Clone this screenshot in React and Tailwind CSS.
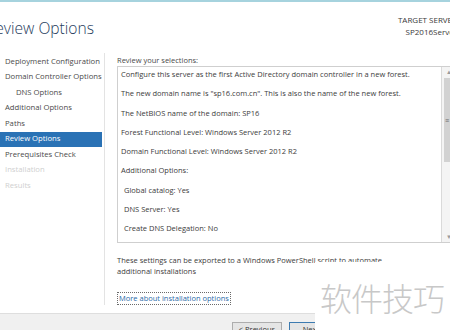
import React from 'react';

const FONT = { fontFamily: '"Open Sans", "Noto Sans", sans-serif' };

const navItems = [
  { label: 'Deployment Configuration' },
  { label: 'Domain Controller Options' },
  { label: 'DNS Options', indent: true },
  { label: 'Additional Options' },
  { label: 'Paths' },
  { label: 'Review Options', active: true },
  { label: 'Prerequisites Check' },
  { label: 'Installation', disabled: true },
  { label: 'Results', disabled: true },
];

const summary = [
  { text: 'Configure this server as the first Active Directory domain controller in a new forest.' },
  { text: 'The new domain name is "sp16.com.cn". This is also the name of the new forest.' },
  { text: 'The NetBIOS name of the domain: SP16' },
  { text: 'Forest Functional Level: Windows Server 2012 R2' },
  { text: 'Domain Functional Level: Windows Server 2012 R2' },
  { text: 'Additional Options:' },
  { text: 'Global catalog: Yes', indent: true },
  { text: 'DNS Server: Yes', indent: true },
  { text: 'Create DNS Delegation: No', indent: true },
];

function NavList() {
  return (
    <div className="w-[111px] shrink-0 pt-[1px] mb-[8px] border-r border-[#e3e3e3]">
      {navItems.map((item) => (
        <div
          key={item.label}
          className={
            'h-[15.5px] mr-[2px] flex items-center text-[7.7px] whitespace-nowrap ' +
            (item.indent ? 'pl-[22px] ' : 'pl-[11px] ') +
            (item.active
              ? 'bg-[#2a72b5] text-white'
              : item.disabled
              ? 'text-[#cfcfcf]'
              : 'text-[#4a4a4a]')
          }
        >
          {item.label}
        </div>
      ))}
    </div>
  );
}

function Scrollbar() {
  return (
    <div className="w-[15px] shrink-0 border-l border-[#dadada] bg-[#f4f4f4] flex flex-col">
      <div className="h-[10px] flex items-center justify-center text-[6px] text-[#9a9a9a]">▲</div>
      <div className="mx-[2px] mt-[1px] h-[84px] bg-[#d2d2d2] flex items-center justify-start pl-[1px] text-[7px] leading-none text-[#6a6a6a]">≡</div>
      <div className="flex-1" />
      <div className="h-[10px] flex items-center justify-center text-[6px] text-[#9a9a9a]">▼</div>
    </div>
  );
}

export default function App() {
  return (
    <div className="relative ml-[-6px] w-[463px] h-[330px] overflow-hidden bg-white flex flex-col" style={FONT}>
      <div className="h-[2px] bg-[#a6d3de]" />

      <div className="h-[51px] flex justify-between items-start">
        <div className="pt-[16px] ml-[-8px] text-[15.6px] leading-[20px] font-light text-[#1e3b5c]">Review Options</div>
        <div className="pt-[12px] text-right text-[8px] leading-[12px] text-[#3a3a3a]">
          <div>TARGET SERVER</div>
          <div>SP2016Server</div>
        </div>
      </div>

      <div className="flex flex-1 min-h-0">
        <NavList />

        <div className="flex-1 min-w-0 pl-[12px] flex flex-col">
          <div className="h-[13px] pt-[1px] text-[7.5px] leading-[12px] text-[#4a4a4a]">Review your selections:</div>
          <div className="h-[177px] border border-[#cfcfcf] flex">
            <div className="flex-1 min-w-0 pl-[3px] pt-[1px] flex flex-col gap-[7.3px] text-[7.5px] leading-[12px] text-[#3c3c3c] whitespace-nowrap overflow-hidden">
              {summary.map((s) => (
                <div key={s.text} className={s.indent ? 'pl-[3px]' : ''}>{s.text}</div>
              ))}
            </div>
            <Scrollbar />
          </div>

          <div className="mt-[12px] text-[7.5px] leading-[11px] text-[#3c3c3c]">
            <div>These settings can be exported to a Windows PowerShell script to automate</div>
            <div>additional installations</div>
          </div>

          <div className="mt-[6px]">
            <span className="inline-block border border-dotted border-[#6a6a6a] px-[1px] text-[7.5px] leading-[11px] text-[#2a6aa8]">More about installation options</span>
          </div>
        </div>
      </div>

      <div className="h-[17px] shrink-0 bg-[#f0f0f0] border-t border-[#dedede] flex gap-[7px] pl-[238px] pt-[8px]">
        <div className="w-[50px] h-[14px] border border-[#adadad] bg-[#e5e5e5] text-[7.5px] text-[#333] text-center leading-[12px]">&lt; Previous</div>
        <div className="w-[50px] h-[14px] border border-[#3d7bb0] bg-[#e5e5e5] text-[7.5px] text-[#333] text-center leading-[12px]">Next &gt;</div>
      </div>

      <div className="absolute left-[321px] top-[262px] w-[150px] h-[70px] bg-white flex items-center pl-[5px]">
        <span className="text-[32px] leading-none tracking-[-1px] text-[#c8c8c8]" style={{ fontFamily: '"Noto Sans CJK SC", sans-serif', fontWeight: 300 }}>软件技巧</span>
      </div>
    </div>
  );
}
